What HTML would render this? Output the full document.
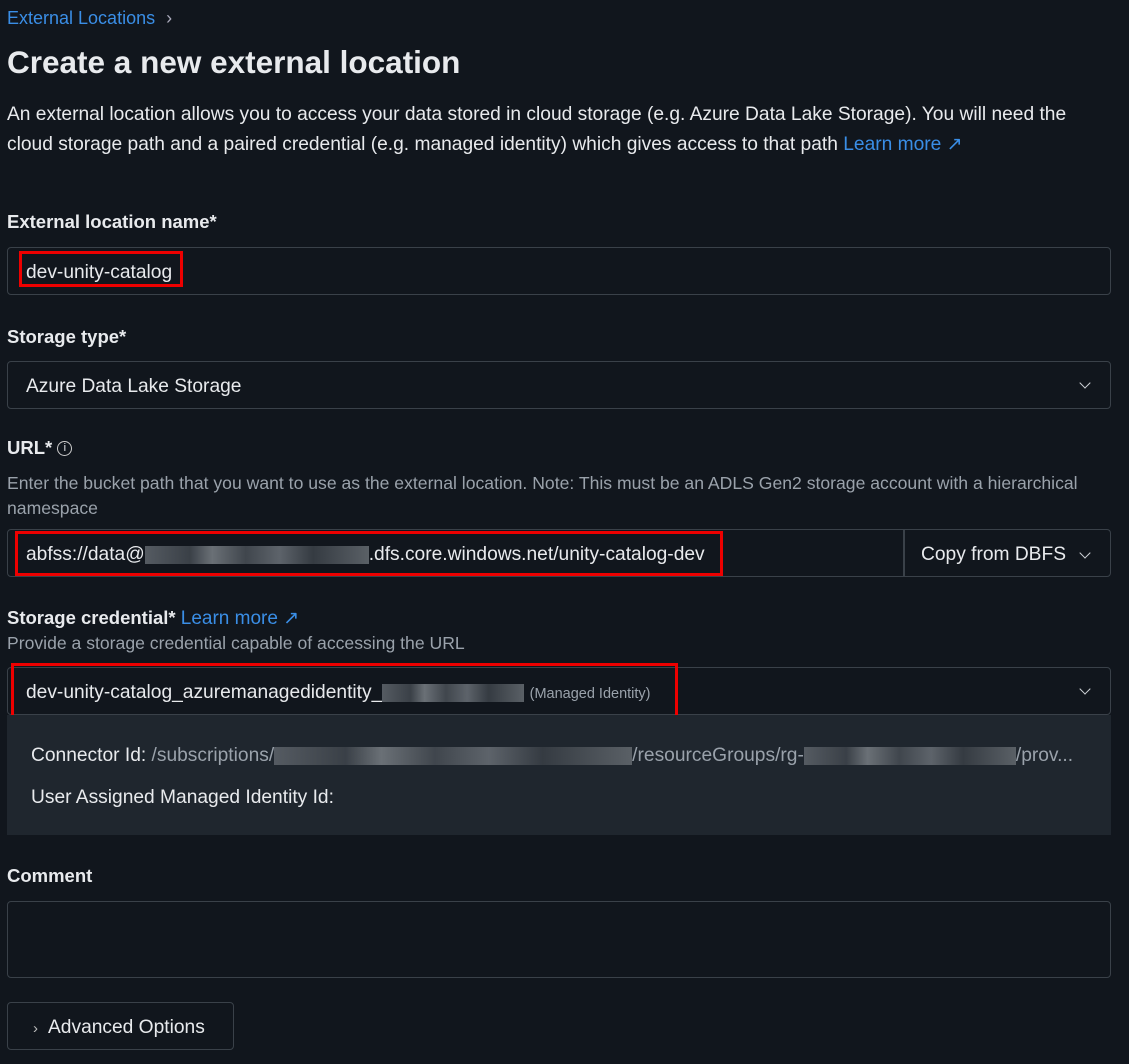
<!DOCTYPE html>
<html><head><style>
body{margin:0;background:#11161d;color:#e8eaed;font-family:"Liberation Sans",sans-serif;width:1129px;height:1064px;overflow:hidden;position:relative}
.a{position:absolute;white-space:nowrap}
.lbl{font-weight:bold;font-size:18.5px}
.box{position:absolute;border:1px solid #3a4149;border-radius:4px;box-sizing:border-box}
.red{position:absolute;border:3px solid #e00;box-sizing:border-box}
.blue{color:#3a8ee6}
.gray{color:#9aa2ab}
.blur{display:inline-block;height:18px;vertical-align:middle;background:linear-gradient(90deg,#555b62,#3a4047 20%,#6a7076 30%,#40464d 45%,#5d636a 60%,#353b42 75%,#5a6066);}
.chev{position:absolute;width:7px;height:7px;border-right:1.5px solid #cfd3d8;border-bottom:1.5px solid #cfd3d8;transform:rotate(45deg)}
</style></head><body>
<div class="a blue" style="left:7px;top:8px;font-size:18px">External Locations <span style="color:#aab;margin-left:6px">›</span></div>
<div class="a" style="left:7px;top:44px;font-size:31.5px;font-weight:bold">Create a new external location</div>
<div class="a" style="left:7px;top:100px;font-size:19.2px;line-height:30px">An external location allows you to access your data stored in cloud storage (e.g. Azure Data Lake Storage). You will need the<br>cloud storage path and a paired credential (e.g. managed identity) which gives access to that path <span class="blue">Learn more ↗</span></div>

<div class="a lbl" style="left:7px;top:211px">External location name*</div>
<div class="box" style="left:7px;top:247px;width:1104px;height:48px"></div>
<div class="a" style="left:26px;top:262px;font-size:19.2px">dev-unity-catalog</div>
<div class="red" style="left:19px;top:251px;width:164px;height:36px"></div>

<div class="a lbl" style="left:7px;top:326px">Storage type*</div>
<div class="box" style="left:7px;top:361px;width:1104px;height:48px"></div>
<div class="a" style="left:26px;top:376px;font-size:19.2px">Azure Data Lake Storage</div>
<div class="chev" style="left:1081px;top:379px"></div>

<div class="a lbl" style="left:7px;top:437px">URL* <span style="font-weight:normal;border:1.5px solid #ccc;border-radius:50%;display:inline-block;width:13px;height:13px;line-height:13px;text-align:center;font-size:11px;vertical-align:3px">i</span></div>
<div class="a gray" style="left:7px;top:471px;font-size:17.6px;line-height:25px">Enter the bucket path that you want to use as the external location. Note: This must be an ADLS Gen2 storage account with a hierarchical<br>namespace</div>
<div class="box" style="left:7px;top:529px;width:898px;height:48px;border-radius:4px 0 0 4px"></div>
<div class="box" style="left:903px;top:529px;width:208px;height:48px;border-radius:0 4px 4px 0"></div>
<div class="a" style="left:26px;top:544px;font-size:19.2px">abfss://data@<span class="blur" style="width:224px"></span>.dfs.core.windows.net/unity-catalog-dev</div>
<div class="a" style="left:921px;top:544px;font-size:19.2px">Copy from DBFS</div>
<div class="chev" style="left:1081px;top:549px"></div>
<div class="red" style="left:15px;top:531px;width:708px;height:45px"></div>

<div class="a lbl" style="left:7px;top:607px">Storage credential* <span class="blue" style="font-weight:normal;font-size:19px">Learn more ↗</span></div>
<div class="a gray" style="left:7px;top:633px;font-size:17.6px">Provide a storage credential capable of accessing the URL</div>
<div class="box" style="left:7px;top:667px;width:1104px;height:48px"></div>
<div class="a" style="left:26px;top:682px;font-size:19.2px">dev-unity-catalog_azuremanagedidentity_<span class="blur" style="width:142px"></span> <span class="gray" style="font-size:14.5px">(Managed Identity)</span></div>
<div class="chev" style="left:1081px;top:685px"></div>
<div class="red" style="left:11px;top:663px;width:667px;height:55px"></div>
<div style="position:absolute;left:7px;top:715px;width:1104px;height:120px;background:#1f262e"></div>
<div class="a" style="left:31px;top:745px;font-size:19.2px">Connector Id: <span class="gray">/subscriptions/<span class="blur" style="width:358px"></span>/resourceGroups/rg-<span class="blur" style="width:212px"></span>/prov...</span></div>
<div class="a" style="left:31px;top:787px;font-size:19.2px">User Assigned Managed Identity Id:</div>

<div class="a lbl" style="left:7px;top:865px">Comment</div>
<div class="box" style="left:7px;top:901px;width:1104px;height:77px"></div>
<div class="box" style="left:7px;top:1002px;width:227px;height:48px"></div>
<div class="a" style="left:33px;top:1017px;font-size:19.2px"><span style="color:#bbb;font-size:15px;margin-right:10px">›</span>Advanced Options</div>
</body></html>
